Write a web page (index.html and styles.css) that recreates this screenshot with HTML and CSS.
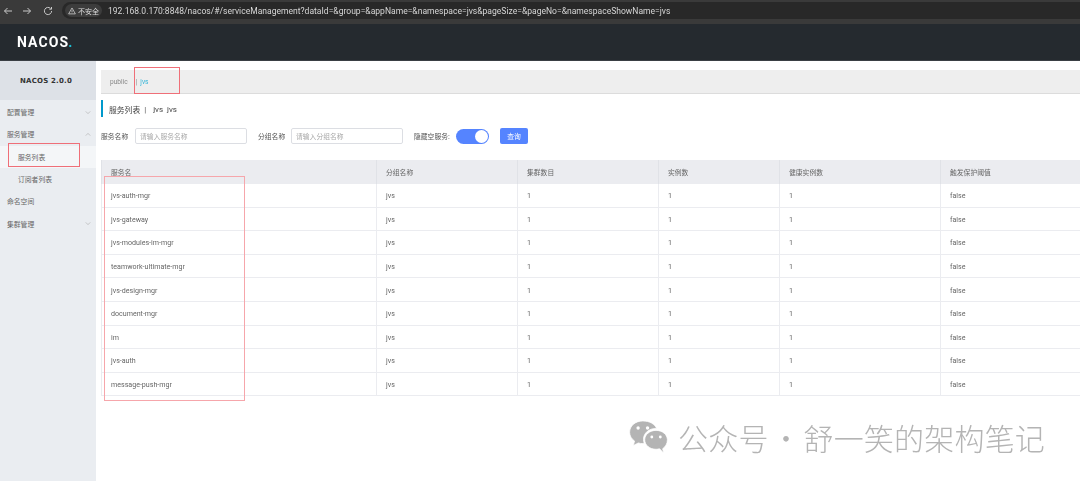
FILE: index.html
```html
<!DOCTYPE html>
<html lang="zh">
<head>
<meta charset="utf-8">
<title>Nacos</title>
<link rel="stylesheet" href="styles.css">
</head>
<body>
<div class="browser">
  <svg class="nav-icon" viewBox="0 0 10 10"><path d="M9 5H1.500M4.500 2 1.500 5l3 3" /></svg>
  <svg class="nav-icon" viewBox="0 0 10 10"><path d="M1 5h7.500M5.500 2l3 3-3 3" /></svg>
  <svg class="nav-icon reload" viewBox="0 0 10 10"><path d="M8.600 5A3.600 3.600 0 1 1 7.500 2.400M8.500 1v2.200H6.300" /></svg>
  <div class="urlbar">
    <span class="secure"><svg class="warn" viewBox="0 0 10 10"><path d="M5 1.200 9.200 8.600H.8ZM5 4v2.400M5 7.200v.4" /></svg>不安全</span>
    <span class="url">192.168.0.170:8848/nacos/#/serviceManagement?dataId=&amp;group=&amp;appName=&amp;namespace=jvs&amp;pageSize=&amp;pageNo=&amp;namespaceShowName=jvs</span>
  </div>
</div>
<header class="topbar"><span class="logo">NACOS<i>.</i></span></header>
<div class="app">
  <aside class="side">
    <div class="side-title">NACOS 2.0.0</div>
    <ul class="menu">
      <li class="menu-item">配置管理<svg class="chev" viewBox="0 0 8 4"><path d="M1 .5l3 3 3-3"/></svg></li>
      <li class="menu-item">服务管理<svg class="chev" viewBox="0 0 8 4"><path d="M1 3.500l3-3 3 3"/></svg></li>
      <li class="menu-sub current">服务列表</li>
      <li class="menu-sub">订阅者列表</li>
      <li class="menu-item">命名空间</li>
      <li class="menu-item">集群管理<svg class="chev" viewBox="0 0 8 4"><path d="M1 .5l3 3 3-3"/></svg></li>
    </ul>
  </aside>
  <main class="content">
    <div class="tabs"><span class="tab">public</span><span class="sep">|</span><span class="tab active">jvs</span></div>
    <h1 class="page-title"><span class="title-zh">服务列表</span><span class="bar">|</span><span>jvs</span><span>jvs</span></h1>
    <form class="filters">
      <label class="flabel">服务名称</label>
      <span class="input">请输入服务名称</span>
      <label class="flabel second">分组名称</label>
      <span class="input">请输入分组名称</span>
      <label class="flabel third">隐藏空服务:</label>
      <span class="switch"><span class="knob"></span></span>
      <span class="btn">查询</span>
    </form>
    <table class="grid">
      <colgroup><col class="c1"><col class="c2"><col class="c3"><col class="c4"><col class="c5"><col></colgroup>
      <thead><tr><th>服务名</th><th>分组名称</th><th>集群数目</th><th>实例数</th><th>健康实例数</th><th>触发保护阈值</th></tr></thead>
      <tbody>
        <tr><td>jvs-auth-mgr</td><td>jvs</td><td>1</td><td>1</td><td>1</td><td>false</td></tr>
        <tr><td>jvs-gateway</td><td>jvs</td><td>1</td><td>1</td><td>1</td><td>false</td></tr>
        <tr><td>jvs-modules-im-mgr</td><td>jvs</td><td>1</td><td>1</td><td>1</td><td>false</td></tr>
        <tr><td>teamwork-ultimate-mgr</td><td>jvs</td><td>1</td><td>1</td><td>1</td><td>false</td></tr>
        <tr><td>jvs-design-mgr</td><td>jvs</td><td>1</td><td>1</td><td>1</td><td>false</td></tr>
        <tr><td>document-mgr</td><td>jvs</td><td>1</td><td>1</td><td>1</td><td>false</td></tr>
        <tr><td>im</td><td>jvs</td><td>1</td><td>1</td><td>1</td><td>false</td></tr>
        <tr><td>jvs-auth</td><td>jvs</td><td>1</td><td>1</td><td>1</td><td>false</td></tr>
        <tr><td>message-push-mgr</td><td>jvs</td><td>1</td><td>1</td><td>1</td><td>false</td></tr>
      </tbody>
    </table>
  </main>
</div>
<div class="mark mark-tab"></div>
<div class="mark mark-menu"></div>
<div class="mark mark-table"></div>
<div class="watermark">
  <svg class="wechat" viewBox="0 0 42 36">
    <path class="w1" d="M15 1C7 1 1 6.400 1 13c0 3.800 2 7 5.200 9.200L5 27l5.200-2.700c1.500.4 3 .7 4.800.7l1.500-.1C16 23.600 15.700 22 15.700 20.500 15.700 13.500 22 8.600 29.600 9 27.900 4.300 22 1 15 1Z"/>
    <circle class="w2" cx="10" cy="8.500" r="1.800"/><circle class="w2" cx="20" cy="8.500" r="1.800"/>
    <path class="w1" d="M41 21c0-5.800-5.500-10-12-10s-12 4.200-12 10 5.500 10 12 10c1.300 0 2.600-.2 3.800-.5L37 35l-1-4.600C39 28.500 41 25 41 21Z"/>
    <circle class="w2" cx="24.500" cy="18" r="1.500"/><circle class="w2" cx="33.500" cy="18" r="1.500"/>
  </svg>
  <span class="wm-text">公众号 · 舒一笑的架构笔记</span>
</div>
</body>
</html>
```
FILE: styles.css
```css
* { box-sizing: border-box; }
html, body { margin: 0; padding: 0; }
body {
  width: 1080px;
  height: 481px;
  overflow: hidden;
  position: relative;
  background: #fff;
  font-family: "Roboto", "Noto Sans CJK SC", sans-serif;
  font-size: 7px;
  color: #555;
}
.browser, .topbar, .app { filter: blur(.35px); }
.browser {
  height: 24px;
  background: #3a3a3a;
  display: flex;
  align-items: center;
  padding: 0 0 3px 3px;
  gap: 9px;
}
.nav-icon { width: 10px; height: 10px; fill: none; stroke: #c8c8c8; stroke-width: 1; flex: none; }
.reload { margin-left: 2px; }
.urlbar {
  flex: 1;
  height: 17px;
  background: #282828;
  border-radius: 9px 0 0 9px;
  display: flex;
  align-items: center;
  padding-left: 3px;
  gap: 6px;
}
.secure {
  display: flex;
  align-items: center;
  gap: 2px;
  height: 13px;
  width: 37px;
  padding: 0 3px;
  border-radius: 7px;
  background: #3c3c3c;
  color: #ddd;
  font-size: 7px;
  white-space: nowrap;
  flex: none;
}
.warn { width: 8px; height: 8px; fill: none; stroke: #ddd; stroke-width: .9; flex: none; }
.url { color: #d6d6d6; font-size: 8.560px; white-space: nowrap; font-family: "Roboto", sans-serif; }
.topbar {
  height: 37px;
  background: #252a2f;
  display: flex;
  align-items: center;
  padding-left: 17px;
  border-bottom: 1px solid #3a3f44;
}
.logo { color: #fff; font-family: "Roboto", sans-serif; font-weight: 700; font-size: 14px; letter-spacing: 1.100px; }
.logo i { color: #1dc1d6; font-style: normal; margin-left: -1px; }
.app { display: flex; height: 420px; }
.side { width: 96px; flex: none; background: #eaedf1; }
.side-title {
  height: 39px;
  background: #dde1e7;
  color: #333;
  font-weight: 700;
  font-size: 7px;
  letter-spacing: .2px;
  display: flex;
  align-items: center;
  justify-content: center;
  padding-right: 4px;
  font-family: "DejaVu Sans", sans-serif;
}
.menu { list-style: none; margin: 0; padding: 1px 0 0; font-family: "Noto Sans CJK SC", sans-serif; }
.menu-item {
  height: 22.300px;
  padding-left: 7px;
  display: flex;
  align-items: center;
  justify-content: space-between;
  padding-right: 5px;
  color: #666;
  font-size: 6.800px;
}
.menu-sub {
  height: 22.300px;
  padding-left: 18px;
  display: flex;
  align-items: center;
  color: #666;
  font-size: 6.800px;
}
.menu-sub.current { background: #f4f6f8; }
.chev { width: 6px; height: 3px; fill: none; stroke: #aaa; stroke-width: .8; }
.content { flex: 1; padding: 9px 0 0 5px; min-width: 0; }
.tabs {
  height: 24px;
  background: #eeeeee;
  border-bottom: 1px solid #dcdcdc;
  display: flex;
  align-items: center;
  padding-left: 9px;
  font-size: 6.600px;
}
.tab { color: #888; }
.tab.active { color: #33b5d8; }
.sep { color: #888; margin: 0 3px 0 8px; }
.page-title {
  margin: 6px 0 0;
  height: 17px;
  border-left: 2px solid #09c;
  padding: 2px 0 0 6px;
  display: flex;
  align-items: center;
  gap: 4px;
  font-weight: 400;
  font-size: 8px;
  color: #444;
  font-family: "Roboto", "Noto Sans CJK SC", sans-serif;
}
.title-zh { font-size: 7.800px; }
.bar { color: #555; margin: 0 3px 0 0; }
.filters {
  display: flex;
  align-items: center;
  margin-top: 11px;
  height: 16px;
  font-family: "Noto Sans CJK SC", sans-serif;
}
.flabel { font-size: 6.800px; color: #555; width: 34px; flex: none; }
.flabel.second { margin-left: 11px; width: 33px; }
.flabel.third { margin-left: 11px; width: 42px; }
.input {
  width: 112px;
  height: 16px;
  border: 1px solid #dcdee3;
  border-radius: 2px;
  color: #aaa;
  font-size: 6.800px;
  line-height: 14px;
  padding-left: 4px;
  flex: none;
}
.switch {
  width: 33px;
  height: 15px;
  background: #5584ff;
  border-radius: 8px;
  display: flex;
  justify-content: flex-end;
  align-items: center;
  padding-right: 1px;
  flex: none;
}
.knob { width: 13px; height: 13px; border-radius: 50%; background: #fff; }
.btn {
  margin-left: 11px;
  width: 28px;
  height: 16px;
  background: #5584ff;
  color: #fff;
  border-radius: 2px;
  font-size: 6.800px;
  display: flex;
  align-items: center;
  justify-content: center;
  flex: none;
}
.grid {
  margin-top: 16px;
  width: 979px;
  table-layout: fixed;
  border-collapse: collapse;
  border-left: 1px solid #ebecf0;
  font-size: 7.100px;
  color: #666;
}
.c1 { width: 275px; }
.c2 { width: 141px; }
.c3 { width: 141px; }
.c4 { width: 121px; }
.c5 { width: 161px; }
.grid th {
  height: 23.500px;
  background: #ebecf0;
  font-weight: 400;
  text-align: left;
  padding: 0 0 0 9px;
  font-size: 6.800px;
  color: #666;
  border-left: 1px solid #e0e2e7;
  font-family: "Noto Sans CJK SC", sans-serif;
}
.grid td {
  height: 23.600px;
  padding: 1px 0 0 9px;
  border-bottom: 1px solid #ebecf0;
  border-left: 1px solid #ebecf0;
}
.mark { position: absolute; border: 1px solid #ef6f78; }
.mark-tab { left: 134px; top: 67px; width: 46px; height: 27px; }
.mark-menu { left: 8px; top: 143px; width: 72px; height: 24px; }
.mark-table { left: 104px; top: 176px; width: 141px; height: 225px; border-color: #f6a6ab; }
.watermark {
  position: absolute;
  left: 628px;
  top: 420px;
  display: flex;
  align-items: center;
  gap: 9px;
}
.wechat { width: 41px; height: 34px; }
.w1 { fill: #b4b4b4; stroke: #fff; stroke-width: .8; }
.w2 { fill: #fff; }
.wm-text {
  color: #b4b4b4;
  font-size: 30px;
  line-height: 34px;
  letter-spacing: .2px;
  word-spacing: -4.500px;
  white-space: nowrap;
  font-family: "Noto Sans CJK SC", sans-serif;
  font-weight: 300;
}
```
